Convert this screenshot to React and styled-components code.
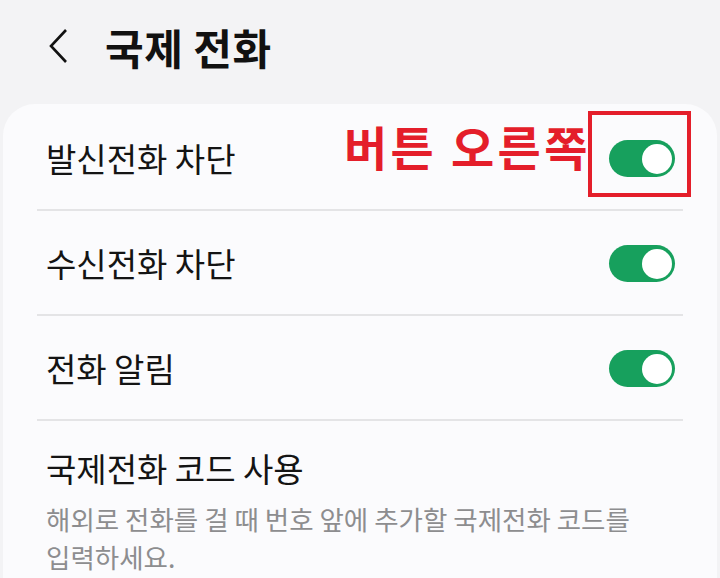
import styled, { createGlobalStyle } from 'styled-components';

const GlobalStyle = createGlobalStyle`
  html, body {
    margin: 0;
    padding: 0;
    background: #f3f3f5;
    font-family: 'Noto Sans CJK KR', 'Noto Sans', sans-serif;
  }
`;

const Page = styled.div`
  position: relative;
  width: 720px;
  height: 578px;
  overflow: hidden;
  background: #f3f3f5;
`;

const Header = styled.div`
  display: flex;
  align-items: center;
  height: 104px;
  padding-left: 48px;
  box-sizing: border-box;
`;

const BackButton = styled.svg`
  width: 22px;
  height: 36px;
  margin-top: -12px;
`;

const Title = styled.h1`
  margin: -12px 0 0 35px;
  font-size: 42px;
  font-weight: 700;
  color: #111;
  letter-spacing: 0.5px;
`;

const Card = styled.div`
  margin: 0 3px;
  background: #fbfbfd;
  border-radius: 32px 32px 0 0;
  padding-top: 2px;
  min-height: 480px;
`;

const Row = styled.div`
  display: flex;
  align-items: center;
  justify-content: space-between;
  height: 103px;
  margin: 0 34px;
  padding: 0 8px 0 9px;
  border-bottom: 2px solid #e4e4e6;
`;

const Label = styled.div`
  font-size: 33px;
  line-height: 44px;
  color: #141414;
`;

const Toggle = styled.div`
  position: relative;
  width: 66px;
  height: 37px;
  border-radius: 19px;
  background: ${p => (p.$on ? '#17a05d' : '#c4c4c6')};
  flex-shrink: 0;
  margin-top: 2px;
`;

const Knob = styled.div`
  position: absolute;
  top: 3.5px;
  right: 3px;
  width: 30px;
  height: 30px;
  border-radius: 50%;
  background: #fff;
`;

const TextRow = styled.div`
  margin: 0 34px;
  padding: 25px 8px 0 9px;
`;

const SubText = styled.div`
  margin-top: 10px;
  font-size: 26.5px;
  line-height: 38px;
  color: #8d8d8f;
`;

const NoteText = styled.div`
  position: absolute;
  left: 344px;
  top: 116px;
  font-size: 47px;
  line-height: 60px;
  font-weight: 700;
  color: #e41e2a;
  letter-spacing: 3.3px;
  white-space: nowrap;
`;

const NoteBox = styled.div`
  position: absolute;
  left: 588px;
  top: 111px;
  width: 103px;
  height: 86px;
  border: 4px solid #e41e2a;
  box-sizing: border-box;
`;

const Switch = ({ on = true }) => (
  <Toggle $on={on}>
    <Knob />
  </Toggle>
);

const rows = ['발신전화 차단', '수신전화 차단', '전화 알림'];

export default function App() {
  return (
    <Page>
      <GlobalStyle />
      <Header>
        <BackButton viewBox="0 0 22 36">
          <polyline points="18,2 3,18 18,34" fill="none" stroke="#111" strokeWidth="2.6" />
        </BackButton>
        <Title>국제 전화</Title>
      </Header>
      <Card>
        {rows.map(r => (
          <Row key={r}>
            <Label>{r}</Label>
            <Switch on />
          </Row>
        ))}
        <TextRow>
          <Label>국제전화 코드 사용</Label>
          <SubText>
            해외로 전화를 걸 때 번호 앞에 추가할 국제전화 코드를
            <br />
            입력하세요.
          </SubText>
        </TextRow>
      </Card>
      <NoteText>버튼 오른쪽</NoteText>
      <NoteBox />
    </Page>
  );
}
